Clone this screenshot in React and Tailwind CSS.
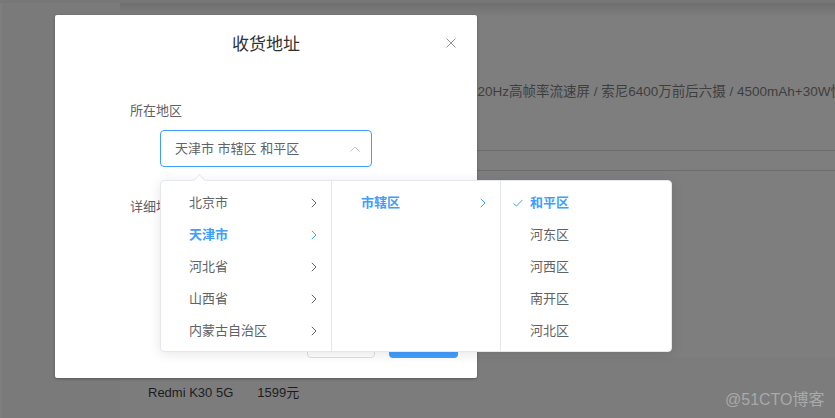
import React from "react";

const Chevron = ({ className = "" }) => (
  <svg width="6" height="10" viewBox="0 0 6 10" className={className}>
    <path d="M0.8 0.8 L5 5 L0.8 9.2" fill="none" stroke="currentColor" strokeWidth="1" />
  </svg>
);

const col1 = ["北京市", "天津市", "河北省", "山西省", "内蒙古自治区"];
const col3 = ["和平区", "河东区", "河西区", "南开区", "河北区"];

export default function App() {
  return (
    <div
      className="relative w-[835px] h-[418px] overflow-hidden bg-[#7a7a7a] flex flex-col"
      style={{ fontFamily: '"Liberation Sans", "Noto Sans CJK SC", sans-serif' }}
    >
      {/* background page under overlay */}
      <div className="h-[3px] shrink-0 bg-[#777777]" />
      <div className="flex flex-1 min-h-0">
        <div className="w-[2px] shrink-0 bg-[#7e7e7e]" />
        <div className="w-[118px] shrink-0 bg-[#7a7a7a]" />
        <div className="flex-1 min-w-0 overflow-hidden flex flex-col bg-[#7e7e7e]">
          <div className="h-[14px] shrink-0 bg-gradient-to-b from-[#6f6f6f] to-[#7e7e7e]" />
          <div className="mt-[65px] ml-[350px] h-[20px] shrink-0 leading-[20px] text-[13.5px] text-[#3e3e3e] whitespace-nowrap">
            120Hz高帧率流速屏 / 索尼6400万前后六摄 / 4500mAh+30W快充
          </div>
          <div className="mt-[48px] h-px shrink-0 bg-[#6c6c6c]" />
          <div className="h-[19px] shrink-0" />
          <div className="h-px shrink-0 bg-[#6c6c6c]" />
          <div className="flex-1" />
          <div className="h-[61px] shrink-0 bg-[#7c7c7c] pt-[26px] pl-[28px] flex gap-[24px] text-[13px] leading-[20px] text-[#1c1c1c]">
            <span>Redmi K30 5G</span>
            <span>1599元</span>
          </div>
        </div>
      </div>

      {/* watermark */}
      <div className="absolute left-[725px] top-[390px] text-[16px] leading-[20px] text-[#a9a9a9] whitespace-nowrap">
        @51CTO博客
      </div>

      {/* dialog */}
      <div className="absolute left-[55px] top-[15px] w-[422px] h-[363px] bg-white rounded-[2px] shadow-[0_1px_3px_rgba(0,0,0,0.3)] flex flex-col">
        <div className="relative pt-[19px] pb-[9px] text-center text-[17px] leading-[22px] text-[#303133]">
          收货地址
          <svg
            width="10"
            height="10"
            viewBox="0 0 10 10"
            className="absolute right-[21px] top-[23px]"
          >
            <path d="M0.5 0.5 L9.5 9.5 M9.5 0.5 L0.5 9.5" stroke="#909399" strokeWidth="1" fill="none" />
          </svg>
        </div>
        <div className="flex-1 pt-[36px] pl-[75px] flex flex-col text-[13px] text-[#606266]">
          <div className="h-[20px] leading-[20px]">所在地区</div>
          <div className="mt-[9px] ml-[30px] w-[212px] h-[37px] border border-[#409eff] rounded-[4px] flex items-center justify-between pl-[14px] pr-[11px]">
            <span className="leading-[20px]">天津市 市辖区 和平区</span>
            <svg width="10" height="6" viewBox="0 0 10 6">
              <path d="M0.5 5.5 L5 1 L9.5 5.5" fill="none" stroke="#c0c4cc" strokeWidth="1" />
            </svg>
          </div>
          <div className="mt-[30px] h-[20px] leading-[20px]">详细地址</div>
        </div>
        <div className="flex justify-end gap-[14px] pr-[19px] pb-[20px]">
          <div className="w-[68px] h-[37px] border border-[#dcdfe6] rounded-[4px] bg-white flex items-center justify-center text-[13px] text-[#606266]">
            取消
          </div>
          <div className="w-[69px] h-[37px] rounded-[4px] bg-[#409eff] flex items-center justify-center text-[13px] text-white">
            确定
          </div>
        </div>
      </div>

      {/* cascader dropdown */}
      <div className="absolute left-[160px] top-[180px] flex bg-white border border-[#e4e7ed] rounded-[4px] shadow-[0_2px_12px_rgba(0,0,0,0.1)] text-[13px]">
        <div className="absolute left-[34px] -top-[5px] w-[9px] h-[9px] rotate-45 bg-white border-l border-t border-[#e4e7ed]" />
        <div className="relative w-[171px] border-r border-[#e4e7ed] pt-[6px] pb-[4px]">
          {col1.map((t, i) => (
            <div
              key={t}
              className={
                "h-[32px] flex items-center justify-between pl-[28px] pr-[14px] " +
                (i === 1 ? "text-[#409eff]" : "text-[#606266]")
              }
            >
              <span className={i === 1 ? "font-bold" : ""}>{t}</span>
              <Chevron />
            </div>
          ))}
        </div>
        <div className="w-[169px] border-r border-[#e4e7ed] pt-[6px] pb-[4px]">
          <div className="h-[32px] flex items-center justify-between pl-[29px] pr-[14px] text-[#409eff]">
            <span className="font-bold">市辖区</span>
            <Chevron />
          </div>
        </div>
        <div className="w-[170px] pt-[6px] pb-[4px]">
          {col3.map((t, i) => (
            <div
              key={t}
              className={
                "h-[32px] flex items-center pl-[12px] " +
                (i === 0 ? "text-[#409eff]" : "text-[#606266]")
              }
            >
              <span className="w-[17px] flex">
                {i === 0 && (
                  <svg width="10" height="8" viewBox="0 0 10 8">
                    <path d="M0.5 4.5 L3.5 7 L9.5 0.8" fill="none" stroke="#409eff" strokeWidth="1" />
                  </svg>
                )}
              </span>
              <span className={i === 0 ? "font-bold" : ""}>{t}</span>
            </div>
          ))}
        </div>
      </div>
    </div>
  );
}
